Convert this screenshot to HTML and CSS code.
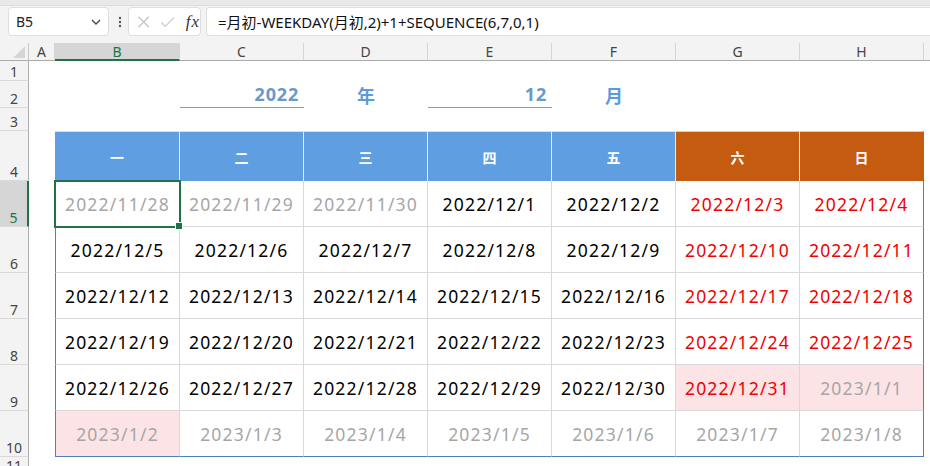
FILE: index.html
```html
<!DOCTYPE html>
<html lang="zh">
<head>
<meta charset="utf-8">
<title>Calendar</title>
<link rel="stylesheet" href="styles.css">
</head>
<body>
<div class="app">
  <div class="topstrip"></div>
  <div class="fbar">
    <div class="namebox">
      <span class="nb-text">B5</span>
      <svg class="chev" width="10" height="6" viewBox="0 0 10 6"><path d="M1 1 L5 5 L9 1" fill="none" stroke="#444" stroke-width="1.3"/></svg>
    </div>
    <svg class="dots" width="4" height="14" viewBox="0 0 4 14"><circle cx="2" cy="3" r="1.2" fill="#555"/><circle cx="2" cy="7" r="1.2" fill="#555"/><circle cx="2" cy="11" r="1.2" fill="#555"/></svg>
    <div class="fxbox">
      <svg width="14" height="14" viewBox="0 0 14 14"><path d="M1.5 1.5 L12.5 12.5 M12.5 1.5 L1.5 12.5" stroke="#c4c4c4" stroke-width="1.2" fill="none"/></svg>
      <svg width="16" height="14" viewBox="0 0 16 14"><path d="M1.5 7.5 L5.5 11.5 L14.5 2.5" stroke="#c4c4c4" stroke-width="1.2" fill="none"/></svg>
      <span class="fx">fx</span>
    </div>
    <div class="formula">=月初-WEEKDAY(月初,2)+1+SEQUENCE(6,7,0,1)</div>
  </div>
  <div class="sheet">
    <div class="corner"><svg width="12" height="12" viewBox="0 0 12 12"><path d="M12 0 L12 12 L0 12 Z" fill="#d6d6d6"/></svg></div>
    <div class="ch">A</div>
    <div class="ch sel">B</div>
    <div class="ch">C</div>
    <div class="ch">D</div>
    <div class="ch">E</div>
    <div class="ch">F</div>
    <div class="ch">G</div>
    <div class="ch">H</div>
    <div class="ch last"></div>

    <div class="rh r1">1</div>
    <div class="rh r2">2</div>
    <div class="rh r3">3</div>
    <div class="rh r4">4</div>
    <div class="rh r5 sel">5</div>
    <div class="rh r6">6</div>
    <div class="rh r7">7</div>
    <div class="rh r8">8</div>
    <div class="rh r9">9</div>
    <div class="rh r10">10</div>
    <div class="rh r11">11</div>

    <div class="ym c2">2022</div>
    <div class="ylab d2">年</div>
    <div class="ym e2">12</div>
    <div class="ylab f2">月</div>

    <div class="cal">
      <div class="hd blue">一</div>
      <div class="hd blue">二</div>
      <div class="hd blue">三</div>
      <div class="hd blue">四</div>
      <div class="hd blue">五</div>
      <div class="hd orange">六</div>
      <div class="hd orange last">日</div>

      <div class="dc g active">2022/11/28</div>
      <div class="dc g">2022/11/29</div>
      <div class="dc g">2022/11/30</div>
      <div class="dc">2022/12/1</div>
      <div class="dc">2022/12/2</div>
      <div class="dc r">2022/12/3</div>
      <div class="dc r last">2022/12/4</div>

      <div class="dc">2022/12/5</div>
      <div class="dc">2022/12/6</div>
      <div class="dc">2022/12/7</div>
      <div class="dc">2022/12/8</div>
      <div class="dc">2022/12/9</div>
      <div class="dc r">2022/12/10</div>
      <div class="dc r last">2022/12/11</div>

      <div class="dc">2022/12/12</div>
      <div class="dc">2022/12/13</div>
      <div class="dc">2022/12/14</div>
      <div class="dc">2022/12/15</div>
      <div class="dc">2022/12/16</div>
      <div class="dc r">2022/12/17</div>
      <div class="dc r last">2022/12/18</div>

      <div class="dc">2022/12/19</div>
      <div class="dc">2022/12/20</div>
      <div class="dc">2022/12/21</div>
      <div class="dc">2022/12/22</div>
      <div class="dc">2022/12/23</div>
      <div class="dc r">2022/12/24</div>
      <div class="dc r last">2022/12/25</div>

      <div class="dc">2022/12/26</div>
      <div class="dc">2022/12/27</div>
      <div class="dc">2022/12/28</div>
      <div class="dc">2022/12/29</div>
      <div class="dc">2022/12/30</div>
      <div class="dc r pink">2022/12/31</div>
      <div class="dc g pink last">2023/1/1</div>

      <div class="dc g pink bot">2023/1/2</div>
      <div class="dc g bot">2023/1/3</div>
      <div class="dc g bot">2023/1/4</div>
      <div class="dc g bot">2023/1/5</div>
      <div class="dc g bot">2023/1/6</div>
      <div class="dc g bot">2023/1/7</div>
      <div class="dc g bot last">2023/1/8</div>
    </div>
  </div>
</div>
</body>
</html>
```

FILE: styles.css
```css
* { box-sizing: border-box; }
html, body { margin: 0; padding: 0; }
body {
  width: 930px;
  height: 466px;
  overflow: hidden;
  background: #fff;
  font-family: "Noto Sans", "Noto Sans CJK SC", sans-serif;
}
.app { display: flex; flex-direction: column; height: 466px; }
.topstrip {
  flex: 0 0 auto;
  height: 6px;
  background: #e9e9e9;
  border-bottom: 1px solid #dcdcdc;
}
.fbar {
  flex: 0 0 auto;
  height: 37px;
  background: #f3f3f3;
  display: flex;
  align-items: flex-start;
  padding: 1px 0 0 8px;
}
.namebox {
  width: 101px;
  height: 29px;
  background: #fff;
  border: 1px solid #dedede;
  border-radius: 4px;
  display: flex;
  align-items: center;
  justify-content: space-between;
  padding: 0 7px 0 7px;
  font-size: 14px;
  color: #222;
}
.dots { margin: 8px 6px 0 9px; }
.fxbox {
  width: 73px;
  height: 29px;
  background: #fff;
  border: 1px solid #dedede;
  border-radius: 4px;
  display: flex;
  align-items: center;
  gap: 10px;
  padding: 0 0 0 8px;
}
.fx {
  font-family: "Liberation Serif", serif;
  font-style: italic;
  font-size: 17px;
  color: #333;
  letter-spacing: 1px;
}
.formula {
  margin-left: 5px;
  flex: 1;
  height: 29px;
  background: #fff;
  border: 1px solid #dedede;
  border-right: none;
  border-radius: 4px 0 0 4px;
  padding: 3px 0 0 11px;
  font-size: 15px;
  color: #111;
}
.sheet {
  flex: 1 1 auto;
  min-height: 0;
  overflow: hidden;
  display: grid;
  grid-template-columns: 29px 26px 125px repeat(6, 124px) 1fr;
  grid-template-rows: 18px 20px 27px 23px 50px repeat(6, 46px) 1fr;
  background: #fff;
}
.corner {
  background: #f3f3f3;
  border-right: 1px solid #c8c8c8;
  border-bottom: 1px solid #ababab;
  display: flex;
  align-items: flex-end;
  justify-content: flex-end;
  padding: 0 3px 2px 0;
}
.ch {
  background: #f3f3f3;
  border-right: 1px solid #d4d4d4;
  border-bottom: 1px solid #ababab;
  font-size: 14px;
  color: #444;
  text-align: center;
  line-height: 17px;
}
.ch.sel {
  background: #d6d6d6;
  color: #217346;
  border-bottom: 2px solid #217346;
}
.ch.last { border-right: none; }
.rh {
  grid-column: 1;
  background: #f3f3f3;
  border-right: 1px solid #ababab;
  border-bottom: 1px solid #dadada;
  font-size: 14px;
  color: #444;
  display: flex;
  align-items: flex-end;
  justify-content: center;
  line-height: 17px;
}
.rh.sel {
  background: #d6d6d6;
  color: #217346;
  border-right: 2px solid #217346;
}
.r1 { grid-row: 2; }
.r2 { grid-row: 3; }
.r3 { grid-row: 4; }
.r4 { grid-row: 5; }
.r5 { grid-row: 6; }
.r6 { grid-row: 7; }
.r7 { grid-row: 8; }
.r8 { grid-row: 9; }
.r9 { grid-row: 10; }
.r10 { grid-row: 11; }
.r11 { grid-row: 12; }

.ym, .ylab {
  grid-row: 3;
  font-family: "Noto Sans CJK SC", "Noto Sans", sans-serif;
  font-weight: 700;
  font-size: 18px;
  display: flex;
  align-items: center;
}
.ym {
  color: #6b99c6;
  justify-content: flex-end;
  padding-right: 5px;
  border-bottom: 1px solid #6fa2d2;
  letter-spacing: 0.8px;
  font-family: "Noto Sans", sans-serif;
}
.ylab {
  color: #5d9adb;
  justify-content: center;
}
.c2 { grid-column: 4; }
.d2 { grid-column: 5; }
.e2 { grid-column: 6; }
.f2 { grid-column: 7; }

.cal {
  grid-column: 3 / 10;
  grid-row: 5 / 12;
  display: grid;
  grid-template-columns: 125px repeat(6, 124px);
  grid-template-rows: 50px repeat(6, 46px);
}
.hd {
  color: #fff;
  font-family: "Noto Sans CJK SC", sans-serif;
  font-weight: 700;
  font-size: 14px;
  display: flex;
  align-items: center;
  justify-content: center;
  border-right: 1px solid #e4ecf6;
  border-top: 1px solid #cfe0f2;
}
.hd.blue { background: #5f9fe1; }
.hd.orange { background: #c55a11; border-top-color: #f0c6a8; }
.hd.last { border-right: 1px solid #c55a11; }
.dc {
  display: flex;
  align-items: center;
  justify-content: center;
  font-size: 17.5px;
  color: #000;
  letter-spacing: 1.2px;
  border-right: 1px solid #d9d9d9;
  border-bottom: 1px solid #d9d9d9;
  position: relative;
}
.cal > .dc:nth-child(7n+1) { border-left: 1px solid #4f7fc0; }
.dc.last { border-right: 1px solid #4f7fc0; }
.dc.bot { border-bottom: 1px solid #4f7fc0; }
.dc.g { color: #a6a6a6; }
.dc.r { color: #f00000; }
.dc.pink { background: #fce4e6; }
.dc.active {
  outline: 2px solid #217346;
  outline-offset: -1px;
  z-index: 1;
}
.dc.active::after {
  content: "";
  position: absolute;
  right: -4px;
  bottom: -4px;
  width: 6px;
  height: 6px;
  background: #217346;
  border: 1px solid #fff;
}
```
